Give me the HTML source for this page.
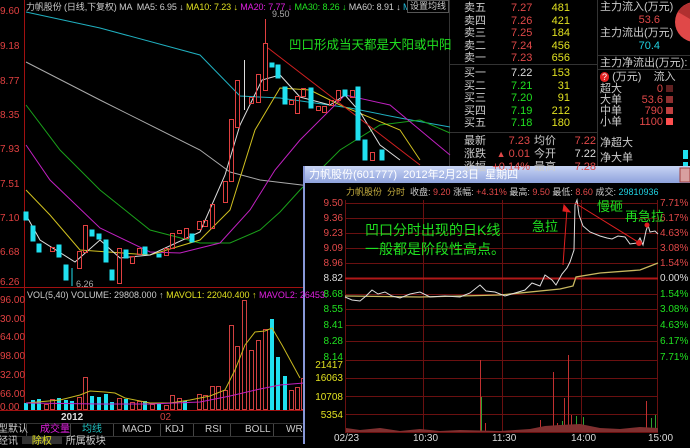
<!DOCTYPE html>
<html><head><meta charset="utf-8"><style>
*{margin:0;padding:0}
body{width:690px;height:444px;background:#000;overflow:hidden;position:relative;font-family:"Liberation Sans","Noto Sans CJK SC",sans-serif;font-size:11px}
.t{position:absolute;white-space:nowrap;line-height:12px}
svg{position:absolute;left:0;top:0}
</style></head><body>
<svg width="690" height="444" viewBox="0 0 690 444">
<line x1="24.5" y1="0" x2="24.5" y2="411" stroke="#a01010"/>
<line x1="0" y1="287.5" x2="450" y2="287.5" stroke="#a01010"/>
<line x1="0" y1="410.5" x2="304" y2="410.5" stroke="#a01010"/>
<line x1="449.5" y1="0" x2="449.5" y2="166" stroke="#333"/>
<g fill="none" stroke-width="1">
<polyline stroke="#20b0c0" points="26,12 100,28 200,55 240,96 280,98 350,108 400,118 450,127"/>
<polyline stroke="#aaa" points="26,62 100,100 200,150 230,172 260,180 310,186"/>
<polyline stroke="#1aa01a" points="26,105 60,150 100,190 150,230 200,243 230,243 260,230 280,212 300,190 340,150 380,125 420,120 450,133"/>
<polyline stroke="#c020c0" points="26,145 50,180 100,228 150,252 180,253 220,243 250,210 275,170 300,140 345,95 390,105 450,155"/>
<polyline stroke="#d0c020" points="26,190 50,215 80,250 150,255 200,240 230,210 255,130 280,88 310,90 340,105 400,130 420,160"/>
<polyline stroke="#ddd" points="26,215 40,240 75,262 100,240 120,258 150,255 200,232 225,175 240,125 262,80 280,75 300,97 330,105 345,95 360,112 380,145 400,160"/>
<line x1="268" y1="48" x2="420" y2="165" stroke="#d02020"/>
</g>
<g fill="#20e0f0" stroke="#20e0f0">
<rect x="24" y="212" width="4" height="8"/><rect x="31" y="226" width="4" height="15"/><rect x="37" y="244" width="4" height="8"/>
<rect x="57" y="245" width="4" height="12"/><rect x="64" y="265" width="4" height="15"/><line x1="72" y1="268" x2="72" y2="286"/>
<rect x="90" y="230" width="4" height="6"/><rect x="97" y="234" width="4" height="5"/><rect x="104" y="240" width="4" height="22"/>
<rect x="110" y="270" width="4" height="10"/><rect x="124" y="250" width="4" height="8"/><rect x="143" y="247" width="4" height="7"/>
<rect x="157" y="254" width="4" height="3"/><rect x="190" y="234" width="4" height="8"/>
<rect x="270" y="63" width="4" height="4"/><rect x="276" y="65" width="4" height="13"/><rect x="283" y="87" width="4" height="17"/>
<rect x="309" y="88" width="4" height="20"/><rect x="343" y="90" width="4" height="6"/><rect x="356" y="87" width="4" height="53"/><rect x="363" y="140" width="4" height="20"/><rect x="380" y="150" width="4" height="10"/>
</g>
<g fill="none" stroke="#e04040">
<rect x="50.5" y="247.5" width="4" height="4"/><rect x="77.5" y="251.5" width="4" height="17"/><rect x="83.5" y="225.5" width="4" height="27"/>
<rect x="117.5" y="248.5" width="4" height="35"/><rect x="130.5" y="256.5" width="4" height="7"/><rect x="137.5" y="248.5" width="4" height="6"/>
<rect x="164.5" y="248.5" width="4" height="7"/><rect x="170.5" y="233.5" width="4" height="15"/><rect x="177.5" y="230.5" width="4" height="3"/>
<rect x="184.5" y="228.5" width="4" height="10"/><rect x="197.5" y="221.5" width="4" height="8"/><rect x="203.5" y="220.5" width="4" height="6"/>
<rect x="210.5" y="204.5" width="4" height="24"/><rect x="223.5" y="181.5" width="4" height="21"/><rect x="229.5" y="119.5" width="4" height="62"/>
<rect x="235.5" y="80.5" width="4" height="47"/><rect x="249.5" y="97.5" width="4" height="6"/><rect x="256.5" y="74.5" width="4" height="28"/>
<rect x="263.5" y="43.5" width="4" height="47"/><line x1="265.5" y1="19" x2="265.5" y2="43"/>
<rect x="289.5" y="100.5" width="4" height="4"/><rect x="295.5" y="96.5" width="4" height="17"/><rect x="301.5" y="88.5" width="4" height="8"/>
<rect x="316.5" y="106.5" width="4" height="4"/><rect x="322.5" y="106.5" width="4" height="6"/><rect x="329.5" y="100.5" width="4" height="5"/><rect x="336.5" y="90.5" width="4" height="10"/><rect x="350.5" y="90.5" width="4" height="7"/><rect x="370.5" y="152.5" width="4" height="8"/>
<line x1="244.5" y1="60" x2="244.5" y2="110" stroke="#ddd"/>
</g>
<text x="272" y="17" fill="#aaa" font-size="9" font-family="Liberation Sans">9.50</text>
<text x="76" y="287" fill="#aaa" font-size="9" font-family="Liberation Sans">6.26</text>
<g fill="#20e0f0">
<rect x="24" y="403" width="4" height="7"/><rect x="31" y="400" width="4" height="10"/><rect x="37" y="399" width="4" height="11"/><rect x="57" y="398" width="4" height="12"/><rect x="64" y="400" width="4" height="10"/><rect x="70" y="401" width="4" height="9"/><rect x="90" y="396" width="4" height="14"/><rect x="97" y="397" width="4" height="13"/><rect x="104" y="394" width="4" height="16"/><rect x="110" y="402" width="4" height="8"/><rect x="124" y="399" width="4" height="11"/><rect x="143" y="401" width="4" height="9"/><rect x="157" y="403" width="4" height="7"/><rect x="183" y="401" width="4" height="9"/><rect x="270" y="319" width="4" height="91"/><rect x="276" y="357" width="4" height="53"/><rect x="283" y="376" width="4" height="34"/>
</g>
<g fill="none" stroke="#d04040">
<rect x="44.5" y="404.5" width="4" height="5"/><rect x="50.5" y="399.5" width="4" height="10"/><rect x="77.5" y="397.5" width="4" height="12"/><rect x="83.5" y="377.5" width="4" height="32"/><rect x="117.5" y="398.5" width="4" height="11"/><rect x="130.5" y="402.5" width="4" height="7"/><rect x="137.5" y="401.5" width="4" height="8"/><rect x="150.5" y="404.5" width="4" height="5"/><rect x="164.5" y="405.5" width="4" height="4"/><rect x="170.5" y="395.5" width="4" height="14"/><rect x="177.5" y="398.5" width="4" height="11"/><rect x="197.5" y="394.5" width="4" height="15"/><rect x="203.5" y="395.5" width="4" height="14"/><rect x="210.5" y="386.5" width="4" height="23"/><rect x="216.5" y="386.5" width="4" height="23"/><rect x="223.5" y="390.5" width="4" height="19"/><rect x="229.5" y="325.5" width="4" height="84"/><rect x="235.5" y="346.5" width="4" height="63"/><rect x="242.5" y="300.5" width="4" height="109"/><rect x="249.5" y="350.5" width="4" height="59"/><rect x="256.5" y="340.5" width="4" height="69"/><rect x="263.5" y="329.5" width="4" height="80"/><rect x="289.5" y="390.5" width="4" height="19"/><rect x="295.5" y="387.5" width="4" height="22"/><rect x="301.5" y="378.5" width="4" height="31"/>
</g>
<polyline fill="none" stroke="#c8b820" points="26,403 60,400 80,395 90,391 105,392 115,393 125,398 150,403 170,403 190,400 210,396 225,390 235,370 245,345 255,332 265,331 272,328 282,345 300,378"/>
<polyline fill="none" stroke="#c020c0" points="26,403 100,404 150,404 200,402 230,396 260,389 280,385 304,383"/>
<line x1="0" y1="423.5" x2="304" y2="423.5" stroke="#333"/>
<line x1="0" y1="436.5" x2="304" y2="436.5" stroke="#333"/>
<g stroke="#444"><line x1="26.5" y1="424" x2="26.5" y2="436"/><line x1="70.5" y1="424" x2="70.5" y2="436"/><line x1="113.5" y1="424" x2="113.5" y2="436"/><line x1="160.5" y1="424" x2="160.5" y2="436"/><line x1="193.5" y1="424" x2="193.5" y2="436"/><line x1="230.5" y1="424" x2="230.5" y2="436"/><line x1="273.5" y1="424" x2="273.5" y2="436"/></g>
<rect x="22" y="437" width="40" height="7" fill="#333"/>
<line x1="450" y1="64.5" x2="597" y2="64.5" stroke="#333"/>
<line x1="450" y1="132.5" x2="597" y2="132.5" stroke="#333"/>
<line x1="597.5" y1="0" x2="597.5" y2="166" stroke="#333"/>
<line x1="597" y1="55.5" x2="690" y2="55.5" stroke="#333"/>
<line x1="597" y1="69.5" x2="690" y2="69.5" stroke="#333"/>
<circle cx="695" cy="22" r="20" fill="#e04848"/>
<path d="M695 22 L678 12 A20 20 0 0 1 690 3 Z" fill="#b03030"/>
<rect x="666" y="85" width="7" height="7" fill="#602020"/><rect x="666" y="96" width="7" height="7" fill="#903030"/><rect x="666" y="107" width="7" height="7" fill="#c04040"/><rect x="666" y="118" width="7" height="7" fill="#ff5050"/>
<rect x="683" y="150" width="5" height="9" fill="#20e0f0"/><rect x="683" y="162" width="5" height="4" fill="#20e0f0"/>
<rect x="303" y="166" width="387" height="278" fill="#000"/>
<defs><linearGradient id="g" x1="0" y1="0" x2="0" y2="1"><stop offset="0" stop-color="#c8d4f4"/><stop offset="1" stop-color="#8ea2dc"/></linearGradient></defs>
<rect x="303" y="166" width="387" height="17" fill="url(#g)"/>
<rect x="303" y="166" width="2" height="278" fill="#8898d8"/>
<rect x="680" y="168" width="10" height="14" fill="#d8a0a0" stroke="#a04040"/>
<g stroke="#6a1010">
<line x1="345" y1="203.5" x2="658" y2="203.5"/><line x1="345" y1="218.5" x2="658" y2="218.5"/><line x1="345" y1="233.5" x2="658" y2="233.5"/><line x1="345" y1="248.5" x2="658" y2="248.5"/><line x1="345" y1="263.5" x2="658" y2="263.5"/><line x1="345" y1="294.5" x2="658" y2="294.5"/><line x1="345" y1="309.5" x2="658" y2="309.5"/><line x1="345" y1="325.5" x2="658" y2="325.5"/><line x1="345" y1="341.5" x2="658" y2="341.5"/><line x1="345" y1="360.5" x2="658" y2="360.5"/>
<line x1="345" y1="378.5" x2="658" y2="378.5"/><line x1="345" y1="396.5" x2="658" y2="396.5"/><line x1="345" y1="414.5" x2="658" y2="414.5"/><line x1="345" y1="432.5" x2="658" y2="432.5"/>
<line x1="345.5" y1="200" x2="345.5" y2="433"/><line x1="657.5" y1="200" x2="657.5" y2="433"/><line x1="423.5" y1="200" x2="423.5" y2="433"/><line x1="502.5" y1="200" x2="502.5" y2="433"/><line x1="581.5" y1="200" x2="581.5" y2="433"/>
</g>
<line x1="345" y1="278.5" x2="658" y2="278.5" stroke="#b01818" stroke-width="2"/>
<polyline fill="none" stroke="#c8b860" stroke-width="1.3" points="345,296 420,297 500,295 560,289 573,286 576,277 600,273 640,270 658,263"/>
<polyline fill="none" stroke="#ddd" points="345,297 352,300 360,301 366,296 372,290 378,294 385,292 392,296 400,298 410,294 420,292 430,297 445,296 460,297 470,293 480,285 486,291 495,292 505,296 515,293 525,290 532,283 540,286 545,275 552,280 556,285 562,274 567,268 570,262 574,250 575,205 577,200 579,215 583,226 590,232 600,236 607,238 612,239 618,236 625,237 630,244 637,243 640,238 643,245 646,231 648,225 650,232 655,231 658,234"/>
<g stroke="#e02020" fill="#e02020"><line x1="563" y1="265" x2="567" y2="209"/><path d="M564 205 L570 212 L563 211 Z"/><line x1="575" y1="203" x2="638" y2="242"/><circle cx="639" cy="243" r="2.5"/><circle cx="647" cy="225" r="2"/></g>
<g stroke="#c03030"><line x1="480.5" y1="360" x2="480.5" y2="432"/><line x1="553.5" y1="372" x2="553.5" y2="432"/><line x1="568.5" y1="355" x2="568.5" y2="432"/><line x1="564.5" y1="398" x2="564.5" y2="432"/><line x1="646.5" y1="401" x2="646.5" y2="432"/><line x1="540.5" y1="420" x2="540.5" y2="432"/><line x1="557.5" y1="423" x2="557.5" y2="432"/><line x1="571.5" y1="415" x2="571.5" y2="432"/><line x1="485.5" y1="423" x2="485.5" y2="432"/></g>
<g stroke="#30a030"><line x1="481.5" y1="397" x2="481.5" y2="432"/><line x1="576.5" y1="416" x2="576.5" y2="432"/><line x1="583.5" y1="417" x2="583.5" y2="432"/><line x1="651.5" y1="418" x2="651.5" y2="432"/><line x1="655.5" y1="415" x2="655.5" y2="432"/><line x1="562.5" y1="421" x2="562.5" y2="432"/></g>
<path d="M346 432 L346 428 L360 430 L380 428 L400 431 L420 429 L440 431 L460 430 L500 431 L530 429 L545 426 L560 425 L580 424 L600 428 L620 429 L640 427 L658 428 L658 432 Z" fill="#803030"/>
</svg>

<div class="t" style="left:26px;top:1px;font-size:9px;letter-spacing:-0.1px;color:#ccc">力帆股份 (日线,下复权) MA &nbsp;MA5: 6.95 ↓ <span style="color:#e0e020">MA10: 7.23 ↓</span> <span style="color:#e020e0">MA20: 7.77 ↓</span> <span style="color:#20e020">MA30: 8.26 ↓</span> MA60: 8.91 ↓ <span style="color:#20c0e0">MA12</span></div>
<div class="t" style="left:407px;top:0px;width:40px;height:11px;font-size:9px;line-height:11px;color:#ccc;background:#000;border:1px solid #555;text-align:center">设置均线</div>
<div class="t" style="left:289px;top:38px;font-size:12.5px;line-height:15px;color:#20e020">凹口形成当天都是大阳或中阳</div>
<div class="t" style="left:0;top:6px;color:#e04040;font-size:10px;line-height:12px">
<div style="position:absolute;top:0">9.60</div><div style="position:absolute;top:35px">9.18</div><div style="position:absolute;top:70px">8.77</div><div style="position:absolute;top:104px">8.35</div><div style="position:absolute;top:138px">7.93</div><div style="position:absolute;top:173px">7.51</div><div style="position:absolute;top:207px">7.10</div><div style="position:absolute;top:241px">6.68</div><div style="position:absolute;top:271px">6.26</div></div>
<div class="t" style="left:0;top:295px;color:#e04040;font-size:10px">
<div style="position:absolute;top:0">96.00</div><div style="position:absolute;top:19px">30.00</div><div style="position:absolute;top:37px">64.00</div><div style="position:absolute;top:56px">98.00</div><div style="position:absolute;top:75px">32.00</div><div style="position:absolute;top:94px">66.00</div><div style="position:absolute;top:107px">0.00</div></div>
<div class="t" style="left:27px;top:289px;font-size:9px;color:#ccc">VOL(5,40) VOLUME: 29808.000 ↑ <span style="color:#e0e020">MAVOL1: 22040.400 ↑</span> <span style="color:#e020e0">MAVOL2: 26453.</span></div>
<div class="t" style="left:61px;top:412px;font-size:10px;color:#ddd;font-weight:bold">2012</div>
<div class="t" style="left:160px;top:412px;font-size:10px;color:#d04040">02</div>
<div class="t" style="left:0;top:424px;font-size:10px;color:#ccc;width:304px">
<span style="position:absolute;left:-2px">型默认</span><span style="position:absolute;left:40px;color:#e020e0">成交量</span><span style="position:absolute;left:82px;color:#20c0c0">均线</span><span style="position:absolute;left:122px">MACD</span><span style="position:absolute;left:165px">KDJ</span><span style="position:absolute;left:205px">RSI</span><span style="position:absolute;left:245px">BOLL</span><span style="position:absolute;left:286px">WR</span></div>
<div class="t" style="left:-2px;top:436px;font-size:10px;color:#ccc">经讯 &nbsp; &nbsp; <span style="color:#e0e020">除权</span> &nbsp; &nbsp; 所属板块</div>

<div class="t" style="left:464px;top:2px;font-size:11px;line-height:12.5px;color:#ccc">卖五<br>卖四<br>卖三<br>卖二<br>卖一</div>
<div class="t" style="left:511px;top:2px;font-size:11px;line-height:12.5px;color:#e04848">7.27<br>7.26<br>7.25<br>7.24<br>7.23</div>
<div class="t" style="left:540px;top:2px;width:30px;text-align:right;font-size:11px;line-height:12.5px;color:#e0e020">481<br>421<br>184<br>456<br>656</div>
<div class="t" style="left:464px;top:67px;font-size:11px;line-height:12.5px;color:#ccc">买一<br>买二<br>买三<br>买四<br>买五</div>
<div class="t" style="left:511px;top:67px;font-size:11px;line-height:12.5px;color:#20e020"><span style="color:#ddd">7.22</span><br>7.21<br>7.20<br>7.19<br>7.18</div>
<div class="t" style="left:540px;top:67px;width:30px;text-align:right;font-size:11px;line-height:12.5px;color:#e0e020">153<br>31<br>91<br>212<br>180</div>
<div class="t" style="left:464px;top:135px;font-size:11px;line-height:13px;color:#ccc">最新<br>涨跌<br>涨幅</div>
<div class="t" style="left:488px;top:135px;width:42px;text-align:right;font-size:11px;line-height:13px;color:#e04848">7.23<br><span style="font-size:9px">▲</span> 0.01<br>+0.14%</div>
<div class="t" style="left:534px;top:135px;font-size:11px;line-height:13px;color:#ccc">均价<br>今开<br>最高</div>
<div class="t" style="left:566px;top:135px;width:30px;text-align:right;font-size:11px;line-height:13px;color:#e04848">7.22<br><span style="color:#ddd">7.22</span><br>7.28</div>
<div class="t" style="left:600px;top:1px;font-size:11px;line-height:13px;color:#ccc">主力流入(万元)</div>
<div class="t" style="left:620px;top:14px;width:40px;text-align:right;color:#e04848">53.6</div>
<div class="t" style="left:600px;top:27px;font-size:11px;color:#ccc">主力流出(万元)</div>
<div class="t" style="left:620px;top:40px;width:40px;text-align:right;color:#20d0e0">70.4</div>
<div class="t" style="left:600px;top:57px;color:#ccc">主力净流出(万元):</div>
<div class="t" style="left:600px;top:72px;color:#ccc;line-height:11px"><span style="background:#e02020;color:#fff;border-radius:5px;font-size:9px;padding:0 2px">?</span> (万元) &nbsp; &nbsp;流入</div>
<div class="t" style="left:600px;top:84px;color:#ccc;line-height:11px">超大<br>大单<br>中单<br>小单</div>
<div class="t" style="left:625px;top:84px;width:38px;text-align:right;color:#e04848;line-height:11px">0<br>53.6<br>790<br>1100</div>
<div class="t" style="left:600px;top:136px;color:#ccc;line-height:15px">净超大<br>净大单</div>

<div class="t" style="left:309px;top:169px;font-size:11px;color:#fff">力帆股份(601777) &nbsp;2012年2月23日 &nbsp;星期四</div>
<div class="t" style="left:346px;top:186px;font-size:9px;color:#ccc"><span style="color:#c8b040">力帆股份 &nbsp;分时</span> &nbsp;收盘: <span style="color:#e04848">9.20</span> 涨幅: <span style="color:#e04848">+4.31%</span> 最高: <span style="color:#e04848">9.50</span> 最低: <span style="color:#e04848">8.60</span> 成交: <span style="color:#20d0e0">29810936</span></div>
<div class="t" style="left:313px;top:198px;font-size:10px;color:#e04848;width:30px;text-align:right">
<div style="position:absolute;right:0;top:0">9.50</div><div style="position:absolute;right:0;top:15px">9.36</div><div style="position:absolute;right:0;top:30px">9.23</div><div style="position:absolute;right:0;top:45px">9.09</div><div style="position:absolute;right:0;top:60px">8.96</div><div style="position:absolute;right:0;top:75px;color:#ddd">8.82</div><div style="position:absolute;right:0;top:91px;color:#20e020">8.68</div><div style="position:absolute;right:0;top:106px;color:#20e020">8.55</div><div style="position:absolute;right:0;top:122px;color:#20e020">8.41</div><div style="position:absolute;right:0;top:138px;color:#20e020">8.28</div><div style="position:absolute;right:0;top:154px;color:#20e020">8.14</div></div>
<div class="t" style="left:660px;top:198px;font-size:10px;color:#e04848">
<div style="position:absolute;top:0">7.71%</div><div style="position:absolute;top:15px">6.17%</div><div style="position:absolute;top:30px">4.63%</div><div style="position:absolute;top:45px">3.08%</div><div style="position:absolute;top:60px">1.54%</div><div style="position:absolute;top:75px;color:#ddd">0.00%</div><div style="position:absolute;top:91px;color:#20e020">1.54%</div><div style="position:absolute;top:106px;color:#20e020">3.08%</div><div style="position:absolute;top:122px;color:#20e020">4.63%</div><div style="position:absolute;top:138px;color:#20e020">6.17%</div><div style="position:absolute;top:154px;color:#20e020">7.71%</div></div>
<div class="t" style="left:313px;top:360px;font-size:10px;color:#e0e020;width:30px;text-align:right">
<div style="position:absolute;right:0;top:0">21417</div><div style="position:absolute;right:0;top:13px">16063</div><div style="position:absolute;right:0;top:32px">10708</div><div style="position:absolute;right:0;top:50px">5354</div></div>
<div class="t" style="left:334px;top:433px;font-size:10px;color:#ddd">02/23</div>
<div class="t" style="left:413px;top:433px;font-size:10px;color:#ddd">10:30</div>
<div class="t" style="left:492px;top:433px;font-size:10px;color:#ddd">11:30</div>
<div class="t" style="left:571px;top:433px;font-size:10px;color:#ddd">14:00</div>
<div class="t" style="left:648px;top:433px;font-size:10px;color:#ddd">15:00</div>
<div class="t" style="left:365px;top:221px;font-size:14px;line-height:19px;color:#20e020">凹口分时出现的日K线<br>一般都是阶段性高点。</div>
<div class="t" style="left:532px;top:221px;font-size:13px;color:#20e020">急拉</div>
<div class="t" style="left:597px;top:201px;font-size:13px;color:#20e020">慢砸</div>
<div class="t" style="left:625px;top:211px;font-size:13px;color:#20e020">再急拉</div>
</body></html>
